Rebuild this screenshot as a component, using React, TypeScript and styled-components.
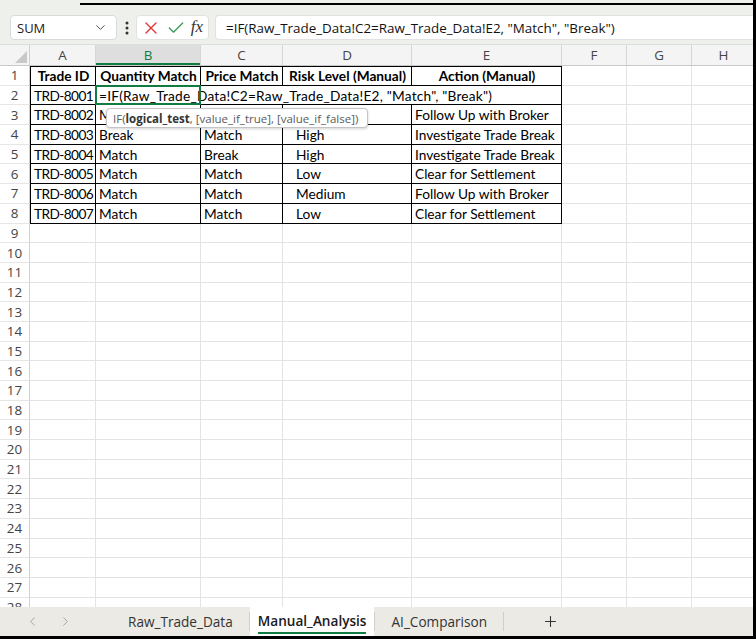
import React from 'react';
import styled, { createGlobalStyle } from 'styled-components';
import { ChevronDown, ChevronLeft, ChevronRight, X, Check, Plus } from 'lucide-react';

const GlobalStyle = createGlobalStyle`
  html, body { margin: 0; padding: 0; background: #fff; }
  * { box-sizing: border-box; }
`;

const COLS = '30px 66px 105px 82px 129px 150px 65px 65px 64px';
const ROW_H = 19.7;
const UI_FONT = '"Open Sans", "Noto Sans", sans-serif';
const CELL_FONT = 'Lato, "Liberation Sans", sans-serif';

const Frame = styled.div`
  width: 756px;
  height: 639px;
  display: flex;
  flex-direction: column;
  border-right: 3px solid #000;
  border-bottom: 3px solid #000;
  overflow: hidden;
  background: #fff;
`;

const TopEdge = styled.div`
  height: 7px;
  background: #eef0ec;
  padding: 3px 0 2px 80px;
  flex: none;
  &::after {
    content: '';
    display: block;
    height: 2px;
    background: #000;
  }
`;

const FormulaBar = styled.div`
  flex: none;
  height: 38px;
  background: #eef0ec;
  display: flex;
  align-items: center;
  padding: 4px 0 0 10px;
  border-bottom: 1px solid #dcdcdc;
`;

const NameBox = styled.div`
  width: 107px;
  height: 25px;
  background: #fff;
  border: 1px solid #dadada;
  border-radius: 4px;
  display: flex;
  align-items: center;
  justify-content: space-between;
  padding: 0 8px 0 6px;
  font-family: ${UI_FONT};
  font-size: 13px;
  color: #222;
`;

const Dots = styled.div`
  width: 19px;
  display: flex;
  justify-content: center;
  align-items: center;
`;

const ActionGroup = styled.div`
  width: 73px;
  height: 25px;
  background: #fff;
  border: 1px solid #e2e2e2;
  border-radius: 4px;
  display: flex;
  align-items: center;
  justify-content: space-between;
  padding: 0 5px 0 4px;
`;

const Fx = styled.span`
  font-family: "Liberation Serif", serif;
  font-style: italic;
  font-size: 17px;
  color: #333;
  line-height: 1;
  padding-bottom: 3px;
`;

const FormulaInput = styled.div`
  flex: 1;
  height: 25px;
  margin-left: 6px;
  background: #fff;
  border: 1px solid #e2e2e2;
  border-right: none;
  border-radius: 4px 0 0 4px;
  display: flex;
  align-items: center;
  padding-left: 10px;
  font-family: ${UI_FONT};
  font-size: 13.4px;
  color: #111;
  white-space: nowrap;
  overflow: hidden;
`;

const HeaderRow = styled.div`
  flex: none;
  display: grid;
  grid-template-columns: ${COLS};
  height: 21px;
  background: #f4f4f4;
  border-bottom: 1px solid #c9c9c9;
`;

const Corner = styled.div`
  border-right: 1px solid #d0d0d0;
  display: flex;
  align-items: flex-end;
  justify-content: flex-end;
  padding: 0 2px 2px 0;
`;

const ColHead = styled.div<{ $active?: boolean }>`
  display: flex;
  align-items: center;
  justify-content: center;
  font-family: ${UI_FONT};
  font-size: 13.4px;
  color: ${(p) => (p.$active ? '#107c41' : '#444')};
  background: ${(p) => (p.$active ? '#dedede' : 'transparent')};
  border-right: 1px solid #d6d6d6;
  box-shadow: ${(p) => (p.$active ? 'inset 0 -2px 0 #107c41' : 'none')};
`;

const Body = styled.div`
  flex: 1;
  overflow: hidden;
  position: relative;
`;

const Row = styled.div`
  display: grid;
  grid-template-columns: ${COLS};
  height: ${ROW_H}px;
`;

const RowHead = styled.div`
  display: flex;
  align-items: center;
  justify-content: center;
  font-family: ${UI_FONT};
  font-size: 13.4px;
  color: #444;
  border-right: 1px solid #d0d0d0;
  border-bottom: 1px solid #e6e6e6;
`;

const Cell = styled.div<{
  $table?: boolean;
  $first?: boolean;
  $top?: boolean;
  $bold?: boolean;
  $center?: boolean;
  $indent?: boolean;
  $span?: number;
  $spacing?: number;
}>`
  position: relative;
  display: flex;
  align-items: center;
  justify-content: ${(p) => (p.$center ? 'center' : 'flex-start')};
  padding: ${(p) => (p.$indent ? '0 0 0 13px' : '0 2px 0 3px')};
  font-family: ${CELL_FONT};
  font-size: 13.7px;
  letter-spacing: ${(p) => p.$spacing ?? 0}px;
  font-weight: ${(p) => (p.$bold ? 700 : 400)};
  color: #000;
  white-space: nowrap;
  overflow: ${(p) => (p.$span ? 'visible' : 'hidden')};
  grid-column: ${(p) => (p.$span ? `span ${p.$span}` : 'auto')};
  border-right: 1px solid ${(p) => (p.$table ? '#000' : '#e3e3e3')};
  border-bottom: 1px solid ${(p) => (p.$table ? '#000' : '#e3e3e3')};
  border-left: ${(p) => (p.$first ? '1px solid #000' : 'none')};
  border-top: ${(p) => (p.$top ? '1px solid #000' : 'none')};
`;

const Selection = styled.div`
  position: absolute;
  left: -1px;
  top: -1px;
  width: 106px;
  height: ${ROW_H + 1}px;
  border: 2px solid #107c41;
  pointer-events: none;
`;

const Tooltip = styled.div`
  position: absolute;
  left: 106px;
  top: 42px;
  width: 262px;
  height: 20px;
  background: #fff;
  border: 1px solid #c4c4c4;
  border-radius: 4px;
  box-shadow: 0 1px 3px rgba(0, 0, 0, 0.18);
  display: flex;
  align-items: center;
  padding-left: 6px;
  font-family: ${UI_FONT};
  font-size: 11.5px;
  color: #5a5a5a;
  white-space: nowrap;
  z-index: 2;
  b {
    color: #333;
    font-weight: 700;
  }
`;

const TabBar = styled.div`
  flex: none;
  height: 29px;
  background: #ebeae5;
  display: flex;
  align-items: stretch;
  font-family: ${UI_FONT};
  font-size: 13.6px;
  color: #333;
`;

const Nav = styled.div`
  width: 112px;
  display: flex;
  align-items: center;
  gap: 18px;
  padding-left: 25px;
  color: #a0a0a0;
`;

const Tab = styled.div<{ $active?: boolean }>`
  display: flex;
  align-items: center;
  padding: 0 ${(p) => (p.$active ? '8px' : '16px')};
  background: ${(p) => (p.$active ? '#fff' : 'transparent')};
  font-weight: ${(p) => (p.$active ? 600 : 400)};
  color: ${(p) => (p.$active ? '#1a1a1a' : '#333')};
  margin-top: ${(p) => (p.$active ? '-2px' : '0')};
`;

const TabLabel = styled.span<{ $active?: boolean }>`
  padding: 3px 0 2px;
  border-bottom: 2px solid ${(p) => (p.$active ? '#107c41' : 'transparent')};
`;

const Sep = styled.div`
  width: 1px;
  align-self: center;
  height: 19px;
  background: #cfcfcf;
`;

const AddTab = styled.div`
  display: flex;
  align-items: center;
  padding-left: 38px;
  color: #333;
`;

const tableRows: string[][] = [
  ['Trade ID', 'Quantity Match', 'Price Match', 'Risk Level (Manual)', 'Action (Manual)'],
  ['TRD-8001', '=IF(Raw_Trade_Data!C2=Raw_Trade_Data!E2, "Match", "Break")'],
  ['TRD-8002', 'Match', 'Match', 'Medium', 'Follow Up with Broker'],
  ['TRD-8003', 'Break', 'Match', 'High', 'Investigate Trade Break'],
  ['TRD-8004', 'Match', 'Break', 'High', 'Investigate Trade Break'],
  ['TRD-8005', 'Match', 'Match', 'Low', 'Clear for Settlement'],
  ['TRD-8006', 'Match', 'Match', 'Medium', 'Follow Up with Broker'],
  ['TRD-8007', 'Match', 'Match', 'Low', 'Clear for Settlement'],
];

const columns = ['A', 'B', 'C', 'D', 'E', 'F', 'G', 'H'];
const TOTAL_ROWS = 28;

function renderRow(r: number) {
  const data = tableRows[r - 1];
  const extra = [0, 1, 2].map((i) => <Cell key={`x${i}`} />);
  if (!data) {
    return (
      <Row key={r}>
        <RowHead>{r}</RowHead>
        {columns.map((c) => (
          <Cell key={c} />
        ))}
      </Row>
    );
  }
  if (r === 1) {
    return (
      <Row key={r}>
        <RowHead>{r}</RowHead>
        {data.map((t, i) => (
          <Cell key={i} $table $top $first={i === 0} $bold $center>
            {t}
          </Cell>
        ))}
        {extra}
      </Row>
    );
  }
  if (r === 2) {
    return (
      <Row key={r}>
        <RowHead>{r}</RowHead>
        <Cell $table $first $spacing={-0.6}>
          {data[0]}
        </Cell>
        <Cell $table $span={4} $spacing={0.22}>
          {data[1]}
          <Selection />
        </Cell>
        {extra}
      </Row>
    );
  }
  return (
    <Row key={r}>
      <RowHead>{r}</RowHead>
      {data.map((t, i) => (
        <Cell key={i} $table $first={i === 0} $indent={i === 3} $spacing={i === 0 ? -0.6 : 0}>
          {t}
        </Cell>
      ))}
      {extra}
    </Row>
  );
}

export default function App() {
  const rows = Array.from({ length: TOTAL_ROWS }, (_, i) => i + 1);
  return (
    <>
      <GlobalStyle />
      <Frame>
        <TopEdge />
        <FormulaBar>
          <NameBox>
            <span>SUM</span>
            <ChevronDown size={15} strokeWidth={1.5} color="#444" />
          </NameBox>
          <Dots>
            <svg width="4" height="14" viewBox="0 0 4 14">
              <circle cx="2" cy="2" r="1.5" fill="#333" />
              <circle cx="2" cy="7" r="1.5" fill="#333" />
              <circle cx="2" cy="12" r="1.5" fill="#333" />
            </svg>
          </Dots>
          <ActionGroup>
            <X size={20} strokeWidth={1.6} color="#e0393e" />
            <Check size={20} strokeWidth={1.6} color="#3a9c5a" />
            <Fx>fx</Fx>
          </ActionGroup>
          <FormulaInput>=IF(Raw_Trade_Data!C2=Raw_Trade_Data!E2, "Match", "Break")</FormulaInput>
        </FormulaBar>
        <HeaderRow>
          <Corner>
            <svg width="12" height="12" viewBox="0 0 12 12">
              <polygon points="12,0 12,12 0,12" fill="#c8c8c8" />
            </svg>
          </Corner>
          {columns.map((c) => (
            <ColHead key={c} $active={c === 'B'}>
              {c}
            </ColHead>
          ))}
        </HeaderRow>
        <Body>
          {rows.map((r) => renderRow(r))}
          <Tooltip>
            IF(<b>logical_test</b>, [value_if_true], [value_if_false])
          </Tooltip>
        </Body>
        <TabBar>
          <Nav>
            <ChevronLeft size={15} strokeWidth={1.5} />
            <ChevronRight size={15} strokeWidth={1.5} />
          </Nav>
          <Tab>
            <TabLabel>Raw_Trade_Data</TabLabel>
          </Tab>
          <Sep />
          <Tab $active>
            <TabLabel $active>Manual_Analysis</TabLabel>
          </Tab>
          <Sep />
          <Tab>
            <TabLabel>AI_Comparison</TabLabel>
          </Tab>
          <Sep />
          <AddTab>
            <Plus size={17} strokeWidth={1.5} />
          </AddTab>
        </TabBar>
      </Frame>
    </>
  );
}
